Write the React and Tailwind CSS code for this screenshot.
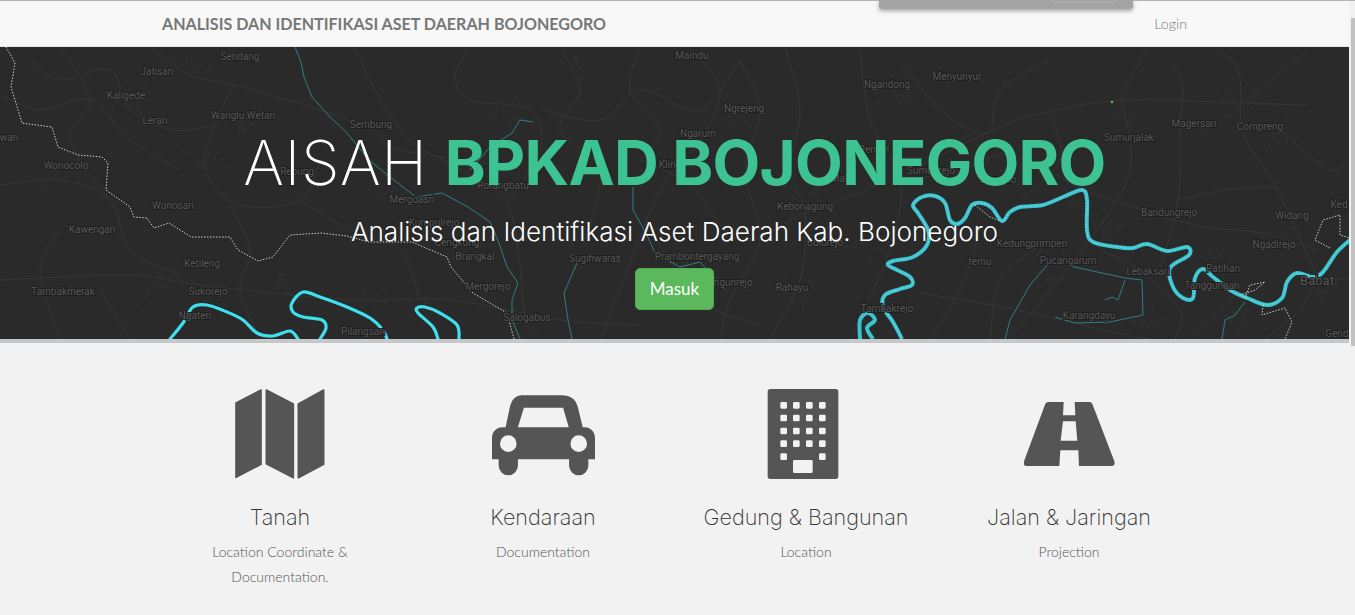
const labels = [
  ["Sendang", 240, 60], ["Jatisari", 157, 75], ["Kaligede", 126, 99], ["Leran", 155, 124],
  ["Wanglu Wetan", 243, 119], ["Sembung", 371, 128], ["Wonocolo", 66, 169], ["Rebung", 297, 175],
  ["Wonosari", 173, 209], ["Kawengan", 92, 233], ["Ketileng", 202, 267], ["Mergoasri", 412, 203],
  ["Kumpulrejo", 434, 226], ["Cengkong", 457, 246], ["Brangkal", 475, 260], ["Porangbatu", 503, 189],
  ["Sugihwaras", 595, 262], ["Prambontergayang", 697, 260], ["Mergorejo", 488, 290],
  ["Tambakmerak", 63, 295], ["Sukorejo", 208, 295], ["Ngaten", 195, 319], ["Pilangsari", 363, 335],
  ["Salogabus", 527, 321], ["wan", 9, 141], ["Maindu", 692, 59], ["Ngrejeng", 744, 112],
  ["Ngandong", 887, 88], ["Menyunyur", 957, 80], ["Ngarum", 698, 137], ["Magersari", 1194, 127],
  ["Compreng", 1260, 130], ["Sumurjalak", 1129, 141], ["Kebonagung", 805, 210], ["Bulurejo", 825, 246],
  ["Rahayu", 792, 291], ["Kedungunrejo", 722, 286], ["Tambakrejo", 887, 312], ["temu", 980, 265],
  ["Kedungprimpen", 1032, 247], ["Pucangarum", 1068, 264], ["Lebaksari", 1148, 275], ["Patihan", 1223, 272],
  ["Tanggungan", 1212, 289], ["Bandungrejo", 1169, 216], ["Widang", 1292, 219], ["Ngadirejo", 1274, 248],
  ["Karangdayu", 1089, 319], ["Gend", 1337, 337], ["Ked", 1339, 208], ["Rengel", 874, 153],
  ["Malo", 842, 182], ["Sumberejo", 931, 174], ["Baureno", 998, 183], ["Klino", 670, 168],
];

const roads = [
  [[0, 280], [130, 275], [200, 285], [350, 300], [450, 300], [560, 320], [640, 325]],
  [[150, 47], [190, 75], [234, 85], [320, 110], [370, 130], [400, 150], [500, 165]],
  [[234, 85], [215, 125], [205, 170], [240, 205], [300, 200], [320, 160]],
  [[355, 47], [375, 90], [410, 140], [470, 175], [510, 210], [525, 320]],
  [[470, 47], [455, 75], [470, 100], [530, 110], [540, 150], [510, 200]],
  [[540, 110], [600, 120], [640, 90], [700, 110], [740, 60]],
  [[640, 160], [690, 185], [740, 240], [805, 213], [883, 183], [987, 133], [1035, 115], [1122, 100], [1238, 103], [1308, 105]],
  [[1308, 50], [1243, 103]],
  [[1217, 47], [1239, 73], [1243, 133], [1276, 187], [1317, 277]],
  [[1169, 63], [1182, 83], [1180, 133], [1178, 200], [1160, 270]],
  [[1148, 47], [1126, 87], [1122, 100], [1130, 170], [1090, 240], [1010, 339]],
  [[1083, 190], [1143, 210], [1203, 227], [1263, 233], [1317, 250]],
  [[920, 293], [1017, 310], [1117, 333], [1150, 339]],
  [[900, 180], [955, 172], [1010, 155], [1083, 190]],
  [[785, 47], [800, 110], [790, 170], [805, 213], [800, 280], [770, 339]],
  [[860, 50], [870, 120], [900, 180], [890, 250], [850, 339]],
  [[690, 47], [720, 90], [700, 140], [660, 190], [620, 290], [600, 339]],
  [[0, 185], [60, 180], [110, 200], [130, 250], [180, 275]],
  [[60, 47], [90, 100], [70, 140], [110, 200]],
  [[1317, 277], [1300, 310], [1265, 339]],
  [[1317, 277], [1351, 280]],
  [[980, 230], [960, 290], [930, 339]],
  [[1040, 245], [1000, 280], [990, 339]],
  [[1240, 290], [1190, 339]],
  [[30, 60], [60, 80], [110, 70], [130, 110], [175, 130], [215, 125]],
  [[0, 95], [40, 110], [90, 100], [130, 140], [180, 170]],
  [[230, 205], [250, 250], [240, 290], [260, 339]],
  [[300, 200], [350, 230], [400, 250], [420, 300]],
  [[560, 47], [580, 90], [560, 130], [600, 170], [585, 240]],
  [[640, 47], [630, 90], [660, 130], [640, 160]],
  [[740, 60], [760, 110], [745, 170], [760, 240], [730, 300], [720, 339]],
  [[900, 60], [940, 110], [987, 133], [1000, 90], [1050, 60]],
  [[1050, 115], [1060, 160], [1020, 200]],
  [[1280, 130], [1330, 170], [1349, 160]],
  [[1178, 200], [1225, 190], [1276, 187]],
  [[1100, 250], [1140, 270], [1180, 310], [1175, 339]],
  [[60, 230], [40, 270], [60, 339]],
  [[100, 290], [130, 339]],
  [[650, 230], [700, 300], [760, 325]],
];

const towns = [
  [205, 58], [205, 165], [370, 300], [420, 305], [290, 288], [525, 335], [395, 200],
  [505, 110], [1085, 205], [1100, 230], [1240, 100], [1185, 125], [1215, 265], [1320, 290],
  [1000, 170], [800, 210], [870, 250], [1120, 108], [570, 240], [1150, 320], [1240, 320],
  [160, 290], [130, 100], [60, 175], [240, 120], [570, 65], [745, 115], [890, 95], [965, 85],
  [1280, 135], [1290, 225], [1050, 270], [800, 295], [700, 265],
];

const rivers = [
  [[170, 339], [183, 323], [193, 307], [207, 305], [227, 312], [243, 320], [257, 333], [273, 336], [290, 331], [298, 339]],
  [[320, 339], [326, 328], [322, 320], [303, 317], [293, 312], [292, 303], [303, 292], [320, 297], [347, 307], [370, 318], [383, 330], [387, 339]],
  [[438, 339], [433, 327], [418, 313], [417, 308], [425, 307], [440, 313], [457, 325], [459, 339]],
];

const mainRiver = [
  [902, 339], [893, 322], [883, 307], [885, 295], [900, 289], [912, 285], [910, 277], [897, 270], [888, 265], [893, 261],
  [913, 257], [927, 245], [928, 230], [918, 213], [913, 205], [922, 197], [935, 196], [945, 203], [950, 220], [957, 224],
  [965, 218], [972, 205], [982, 203], [992, 208], [1002, 221], [1010, 212], [1020, 207], [1043, 205], [1063, 197], [1082, 190],
  [1087, 200], [1087, 230], [1093, 242], [1117, 247], [1133, 248], [1147, 244], [1167, 251], [1187, 247], [1189, 255], [1170, 268],
  [1173, 287], [1183, 298], [1193, 298], [1195, 278], [1203, 269], [1213, 277], [1230, 290], [1247, 298], [1267, 305], [1282, 298],
  [1287, 282], [1297, 273], [1313, 277], [1323, 272], [1337, 252], [1350, 240],
];

const smallLoop = [[860, 339], [860, 320], [868, 313], [875, 320], [867, 328], [873, 339]];

const thinRivers = [
  [[295, 47], [301, 62], [304, 77], [312, 97], [330, 117], [347, 133], [369, 160], [390, 177], [416, 197], [442, 193], [468, 207], [490, 222], [499, 243], [507, 267], [518, 283], [512, 300], [512, 320], [520, 339]],
  [[533, 122], [520, 120], [512, 133], [490, 147], [470, 170]],
  [[577, 263], [564, 293], [568, 320], [572, 339]],
  [[633, 187], [633, 210], [646, 233], [655, 253], [680, 267], [700, 262], [725, 290]],
  [[1050, 262], [1030, 285], [1010, 320], [1005, 339]],
  [[1070, 266], [1125, 278], [1142, 280], [1143, 315], [1110, 322], [1075, 323], [1055, 317]],
  [[1125, 280], [1118, 300], [1112, 297], [1105, 300]],
  [[1245, 302], [1235, 315], [1225, 320], [1222, 339]],
];

const borderLeft = [
  [6, 47], [15, 63], [11, 87], [22, 123], [52, 127], [58, 147], [78, 155], [102, 157], [108, 163], [106, 190],
  [130, 207], [134, 217], [147, 218], [154, 228], [169, 223], [191, 237], [230, 237], [238, 250], [258, 261], [273, 257],
  [290, 235], [321, 233], [347, 236], [369, 242], [412, 242], [447, 257], [451, 267], [473, 293], [507, 313], [514, 339],
];

const borderRight = [
  [[975, 205], [990, 217], [1000, 221]],
  [[1245, 298], [1250, 285], [1265, 282], [1255, 290], [1240, 295]],
  [[1263, 305], [1262, 315], [1285, 308], [1292, 322], [1285, 339]],
  [[1330, 248], [1315, 240], [1323, 220], [1340, 215], [1340, 235], [1350, 238]],
];

// catmull-rom through the points, good enough for rivers
function smooth(pts) {
  let d = `M${pts[0][0]} ${pts[0][1]}`;
  for (let i = 0; i < pts.length - 1; i++) {
    const p0 = pts[i - 1] || pts[i];
    const p1 = pts[i];
    const p2 = pts[i + 1];
    const p3 = pts[i + 2] || p2;
    const c1x = p1[0] + (p2[0] - p0[0]) / 6;
    const c1y = p1[1] + (p2[1] - p0[1]) / 6;
    const c2x = p2[0] - (p3[0] - p1[0]) / 6;
    const c2y = p2[1] - (p3[1] - p1[1]) / 6;
    d += ` C${c1x.toFixed(1)} ${c1y.toFixed(1)} ${c2x.toFixed(1)} ${c2y.toFixed(1)} ${p2[0]} ${p2[1]}`;
  }
  return d;
}

function line(pts) {
  return "M" + pts.map((p) => p.join(" ")).join(" L");
}

// little street tangles around the towns
function townStreets(cx, cy, seed) {
  let s = seed * 97 + 13;
  const rnd = () => {
    s = (s * 16807) % 2147483647;
    return (s % 1000) / 1000;
  };
  let d = "";
  for (let i = 0; i < 12; i++) {
    const x = cx + rnd() * 36 - 18;
    const y = cy + rnd() * 26 - 13;
    d += `M${x.toFixed(1)} ${y.toFixed(1)} l${(rnd() * 14 - 7).toFixed(1)} ${(rnd() * 14 - 7).toFixed(1)} l${(rnd() * 10 - 5).toFixed(1)} ${(rnd() * 10 - 5).toFixed(1)} `;
  }
  return d;
}

function MapBackground() {
  return (
    <svg className="absolute inset-0 w-full h-full" viewBox="0 47 1349 292" preserveAspectRatio="none">
      <g fill="none" stroke="#363636" strokeWidth="1">
        {roads.map((r, i) => (
          <path key={i} d={smooth(r)} strokeLinejoin="round" />
        ))}
        {towns.map((t, i) => (
          <path key={i} d={townStreets(t[0], t[1], i + 1)} stroke="#343434" strokeWidth="0.7" />
        ))}
      </g>
      <g fill="none" stroke="#2f7f86" strokeWidth="1" strokeLinejoin="round">
        {thinRivers.map((r, i) => (
          <path key={i} d={line(r)} />
        ))}
      </g>
      <g fill="none" stroke="#3fdfee" strokeWidth="3.2" strokeLinecap="round">
        {rivers.map((r, i) => (
          <path key={i} d={smooth(r)} />
        ))}
      </g>
      <path d={smooth(mainRiver)} fill="none" stroke="#39c3cf" strokeWidth="4" />
      <path d={smooth(smallLoop)} fill="none" stroke="#39c3cf" strokeWidth="4" />
      <path d={smooth(mainRiver)} fill="none" stroke="#d8f4f6" strokeWidth="1" strokeDasharray="1.5 1.5" opacity="0.5" />
      <g fill="none" stroke="#d0d0d0" strokeWidth="1" strokeDasharray="1.5 1.5">
        <path d={line(borderLeft)} />
        {borderRight.map((r, i) => (
          <path key={i} d={line(r)} />
        ))}
      </g>
      <circle cx="1112" cy="102" r="1.2" fill="#6fbf3c" />
      <g className="font-['Roboto',sans-serif]" fontSize="10" fill="#575757" textAnchor="middle" stroke="#1f1f1f" strokeWidth="2" paintOrder="stroke">
        {labels.map(([name, x, y]) => (
          <text key={name} x={x} y={y}>{name}</text>
        ))}
        <text x="1317" y="285" fontSize="13">Babat</text>
      </g>
    </svg>
  );
}

function MapIcon() {
  return (
    <svg viewBox="165 42 270 270" className="w-[90px] h-[90px]" fill="#555" stroke="#555" strokeWidth="5" strokeLinejoin="round">
      <path d="M168 84 L243 45 L243 268 L168 307 Z" />
      <path d="M259 45 L340 87 L340 308 L259 266 Z" />
      <path d="M355 87 L431 45 L431 268 L355 308 Z" />
    </svg>
  );
}

function CarIcon() {
  return (
    <svg viewBox="934 42 310 270" className="w-[103px] h-[90px]">
      <path
        fill="#555"
        fillRule="evenodd"
        d="M1025 60 H1145 C1170 60 1186 72 1192 95 L1207 157 H1212 C1232 157 1244 172 1244 190 V253 H1224 V272 A29 29 0 0 1 1166 272 V253 H1012 V272 A29 29 0 0 1 954 272 V253 H934 V190 C934 172 946 157 966 157 H975 L988 95 C994 72 1005 60 1025 60 Z M1030 98 L1012 157 H1165 L1148 98 Z M983 181 A25 25 0 1 0 983 231 A25 25 0 1 0 983 181 Z M1195 181 A25 25 0 1 0 1195 231 A25 25 0 1 0 1195 181 Z"
      />
    </svg>
  );
}

function BuildingIcon() {
  const cols = [271, 309, 348, 387];
  const rows = [80, 118, 157, 195];
  return (
    <svg viewBox="213 41 270 270" className="w-[90px] h-[90px]">
      <rect x="233" y="41" width="212" height="270" rx="8" fill="#555" />
      <g fill="#f2f2f2">
        {rows.map((y) =>
          cols.map((x) => <rect key={`${x}-${y}`} x={x} y={y} width="20" height="20" rx="4" />)
        )}
        <rect x="271" y="234" width="20" height="20" rx="4" />
        <rect x="387" y="234" width="20" height="20" rx="4" />
        <rect x="309" y="254" width="59" height="39" rx="4" />
      </g>
    </svg>
  );
}

function RoadIcon() {
  return (
    <svg viewBox="1003 41 273 270" className="w-[91px] h-[90px]">
      <path
        fill="#555"
        fillRule="evenodd"
        d="M1076 80 H1122 L1120 120 H1157 L1155 80 H1199 C1204 80 1207 83 1209 88 L1274 258 C1277 266 1273 272 1265 272 H1168 L1166 225 H1112 L1109 272 H1012 C1004 272 1000 266 1003 258 L1066 88 C1068 83 1071 80 1076 80 Z M1120 138 L1113 196 H1163 L1158 138 Z"
      />
    </svg>
  );
}

const features = [
  { title: "Tanah", icon: MapIcon, desc: ["Location Coordinate &", "Documentation."] },
  { title: "Kendaraan", icon: CarIcon, desc: ["Documentation"] },
  { title: "Gedung & Bangunan", icon: BuildingIcon, desc: ["Location"] },
  { title: "Jalan & Jaringan", icon: RoadIcon, desc: ["Projection"] },
];

export default function App() {
  return (
    <div className="relative h-[615px] overflow-hidden bg-[#f2f2f2] font-['Lato',sans-serif]">
      {/* modal peeking from the top */}
      <div className="absolute left-[879px] top-0 w-[254px] h-[9px] bg-[#a3a3a3] rounded-b-[3px] shadow-[0_2px_4px_rgba(0,0,0,0.35)] z-10">
        <div className="absolute left-[173px] top-0 w-[64px] h-[3px] border-b border-x border-[#b0b0b0] rounded-b-[2px]" />
      </div>

      <div className="h-px bg-[#b4b4b4]" />

      <div className="flex">
        <div className="flex-1 min-w-0">
          {/* Navbar */}
          <div className="h-[46px] bg-[#f8f8f8] border-b border-[#e7e7e7] flex items-center justify-between pl-[162px] pr-[162px]">
            <span className="text-[16.08px] leading-[20px] font-bold text-[#777]">
              ANALISIS DAN IDENTIFIKASI ASET DAERAH BOJONEGORO
            </span>
            <span className="text-[14.3px] font-light text-[#777]">Login</span>
          </div>

          {/* Hero */}
          <div className="relative h-[296px] bg-[#2a2a2a] border-b-4 border-[#c4c8cb]">
            <MapBackground />
            <div className="relative flex flex-col items-center pt-[80px] font-['Inter',sans-serif]">
              <h1 className="text-[62px] leading-[72px] font-extralight text-white whitespace-nowrap">
                <span className="tracking-[0.5px]">AISAH</span>{" "}
                <span className="font-bold text-[#3cc391] tracking-[-0.7px]">BPKAD BOJONEGORO</span>
              </h1>
              <p className="mt-[15px] text-[26.1px] leading-[36px] font-light text-white whitespace-nowrap">
                Analisis dan Identifikasi Aset Daerah Kab. Bojonegoro
              </p>
              <button className="mt-[18px] w-[79px] h-[42px] rounded-[5px] bg-[#5cb85c] border border-[#4cae4c] text-[17px] text-white font-['Lato',sans-serif]">
                Masuk
              </button>
            </div>
          </div>
        </div>

        {/* scrollbar */}
        <div className="w-[6px] h-[345px] bg-[#f1f1f1] pl-[2px] pt-[17px]">
          <div className="h-[328px] bg-[#c1c1c1]" />
        </div>
      </div>

      {/* Features */}
      <div className="flex justify-center pt-[43px] pr-[6px]">
        {features.map((f) => (
          <div key={f.title} className="w-[263px] flex flex-col items-center text-center">
            <div className="h-[90px] flex items-center justify-center">
              <f.icon />
            </div>
            <h3 className="mt-[24px] text-[21.6px] leading-[28px] font-extralight text-[#333] font-['Inter',sans-serif] whitespace-nowrap">
              {f.title}
            </h3>
            <div className="mt-[8px] text-[14px] leading-[25px] font-light text-[#555]">
              {f.desc.map((d) => (
                <p key={d}>{d}</p>
              ))}
            </div>
          </div>
        ))}
      </div>
    </div>
  );
}
